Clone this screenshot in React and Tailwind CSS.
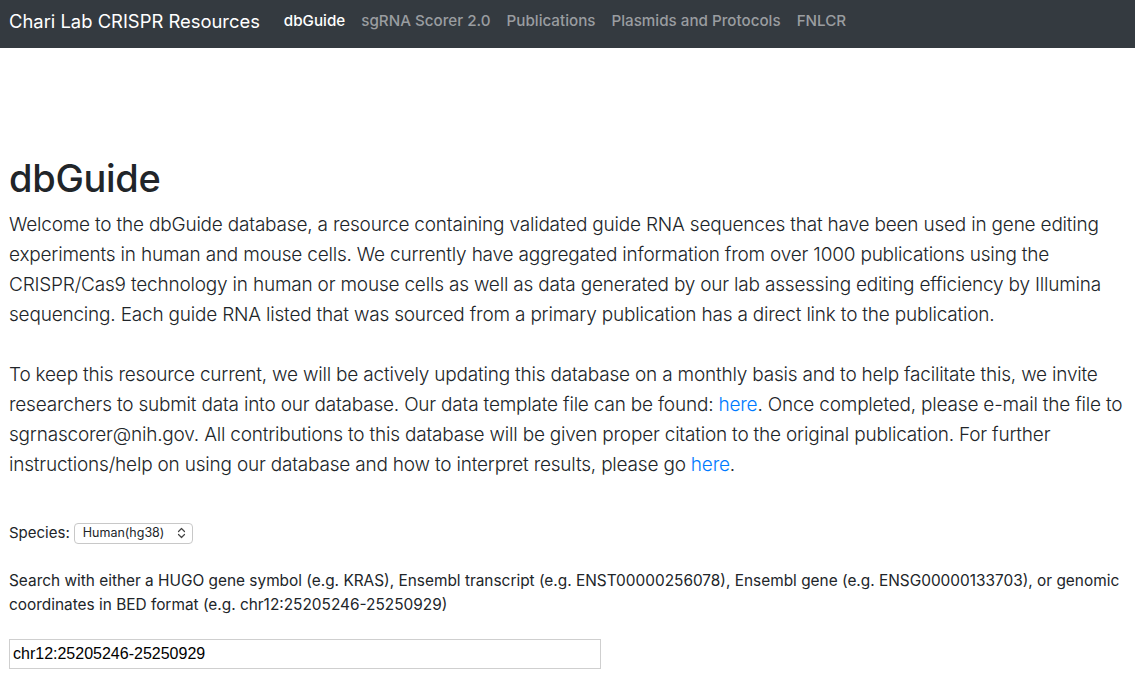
import React from "react";

export default function App() {
  const sans = { fontFamily: "Inter, 'Noto Sans', sans-serif" };
  return (
    <div className="min-h-screen bg-white text-[#212529]" style={sans}>
      <nav className="flex h-12 items-center bg-[#343a40] px-[9px] pb-[5px]">
        <span className="mr-[24px] text-[18.4px] leading-none text-white">Chari Lab CRISPR Resources</span>
        <div className="flex items-center gap-[16px] text-[15.2px] font-medium">
          <span className="text-white">dbGuide</span>
          <span className="text-[#9a9da0]">sgRNA Scorer 2.0</span>
          <span className="text-[#9a9da0]">Publications</span>
          <span className="text-[#9a9da0]">Plasmids and Protocols</span>
          <span className="text-[#9a9da0]">FNLCR</span>
        </div>
      </nav>
      <main className="px-[9px] pt-[106px]">
        <h1 className="mb-2 text-[38px] font-medium leading-[48px] tracking-[-0.3px]">dbGuide</h1>
        <p className="text-[19px] font-light leading-[30px] tracking-[-0.2px] whitespace-nowrap">
          Welcome to the dbGuide database, a resource containing validated guide RNA sequences that have been used in gene editing
          <br />
          experiments in human and mouse cells. We currently have aggregated information from over 1000 publications using the
          <br />
          CRISPR/Cas9 technology in human or mouse cells as well as data generated by our lab assessing editing efficiency by Illumina
          <br />
          sequencing. Each guide RNA listed that was sourced from a primary publication has a direct link to the publication.
          <br />
          <br />
          To keep this resource current, we will be actively updating this database on a monthly basis and to help facilitate this, we invite
          <br />
          researchers to submit data into our database. Our data template file can be found: <span className="text-[#007bff]">here</span>. Once completed, please e-mail the file to
          <br />
          sgrnascorer@nih.gov. All contributions to this database will be given proper citation to the original publication. For further
          <br />
          instructions/help on using our database and how to interpret results, please go <span className="text-[#007bff]">here</span>.
        </p>
        <div className="mt-[42px] flex items-center text-[15px]">
          <span>Species:</span>
          <div className="ml-[4px] flex h-[21px] w-[119px] items-center justify-between rounded-[4px] border border-[#c8c8c8] bg-white pl-[8px] pr-[6px] text-[12.5px]">
            <span>Human(hg38)</span>
            <svg width="9" height="12" viewBox="0 0 9 12" fill="none" stroke="#444" strokeWidth="1.2" strokeLinecap="round" strokeLinejoin="round">
              <path d="M1.5 4.5 L4.5 1.5 L7.5 4.5" />
              <path d="M1.5 7.5 L4.5 10.5 L7.5 7.5" />
            </svg>
          </div>
        </div>
        <p className="mt-[24px] text-[15.4px] leading-[24px] whitespace-nowrap">
          Search with either a HUGO gene symbol (e.g. KRAS), Ensembl transcript (e.g. ENST00000256078), Ensembl gene (e.g. ENSG00000133703), or genomic
          <br />
          coordinates in BED format (e.g. chr12:25205246-25250929)
        </p>
        <div
          className="mt-[22px] flex h-[30px] w-[592px] items-center border border-[#cfcfcf] px-[3px] text-[16px] text-black"
          style={{ fontFamily: "'Liberation Sans', Arial, sans-serif" }}
        >
          chr12:25205246-25250929
        </div>
      </main>
    </div>
  );
}
